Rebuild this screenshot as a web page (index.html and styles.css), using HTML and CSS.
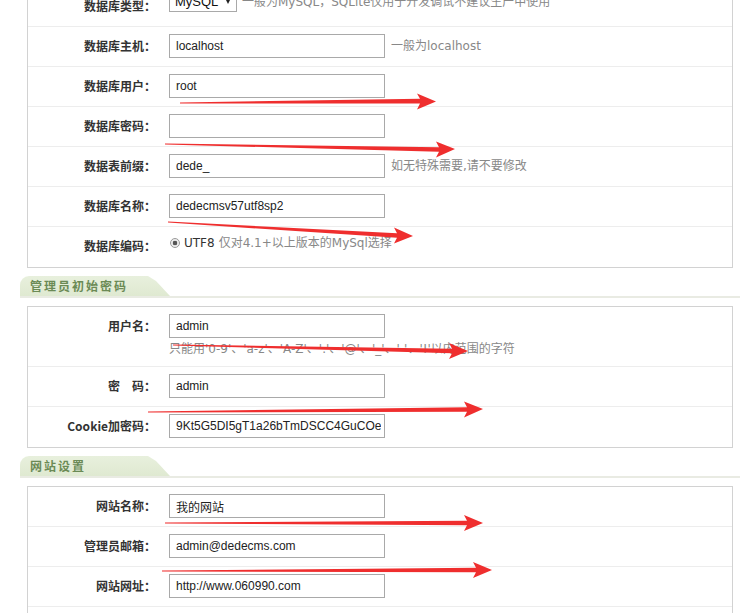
FILE: index.html
```html
<!DOCTYPE html>
<html lang="zh-CN">
<head>
<meta charset="utf-8">
<title>DedeCMS 安装 - 参数配置</title>
<link rel="stylesheet" href="styles.css">
</head>
<body>
<div class="page">
  <div class="panel">
    <div class="row">
      <div class="lbl">数据库类型：</div>
      <div class="fld fld-type"><span class="select">MySQL<span class="caret"></span></span><span class="hint hint-sel">一般为MySQL，SQLite仅用于开发调试不建议生产中使用</span></div>
    </div>
    <div class="row">
      <div class="lbl">数据库主机：</div>
      <div class="fld"><input class="txt" type="text" value="localhost"><span class="hint">一般为localhost</span></div>
    </div>
    <div class="row">
      <div class="lbl">数据库用户：</div>
      <div class="fld"><input class="txt" type="text" value="root"></div>
    </div>
    <div class="row">
      <div class="lbl">数据库密码：</div>
      <div class="fld"><input class="txt" type="text" value=""></div>
    </div>
    <div class="row">
      <div class="lbl">数据表前缀：</div>
      <div class="fld"><input class="txt" type="text" value="dede_"><span class="hint">如无特殊需要,请不要修改</span></div>
    </div>
    <div class="row">
      <div class="lbl">数据库名称：</div>
      <div class="fld"><input class="txt" type="text" value="dedecmsv57utf8sp2"></div>
    </div>
    <div class="row">
      <div class="lbl">数据库编码：</div>
      <div class="fld fld-enc"><span class="radio"></span><span class="enc">UTF8</span><span class="hint hint-enc">仅对4.1+以上版本的MySql选择</span></div>
    </div>
  </div>

  <div class="sec"><div class="tab">管理员初始密码</div></div>

  <div class="panel">
    <div class="row row-tall">
      <div class="lbl">用户名：</div>
      <div class="fld fld-col"><input class="txt" type="text" value="admin"><span class="hint hint-below">只能用'0-9'、'a-z'、'A-Z'、'.'、'@'、'_'、'-'、'!'以内范围的字符</span></div>
    </div>
    <div class="row">
      <div class="lbl">密　码：</div>
      <div class="fld"><input class="txt" type="text" value="admin"></div>
    </div>
    <div class="row">
      <div class="lbl">Cookie加密码：</div>
      <div class="fld"><input class="txt" type="text" value="9Kt5G5DI5gT1a26bTmDSCC4GuCOeFjWQ"></div>
    </div>
  </div>

  <div class="sec"><div class="tab">网站设置</div></div>

  <div class="panel">
    <div class="row">
      <div class="lbl">网站名称：</div>
      <div class="fld"><input class="txt" type="text" value="我的网站"></div>
    </div>
    <div class="row">
      <div class="lbl">管理员邮箱：</div>
      <div class="fld"><input class="txt" type="text" value="admin@dedecms.com"></div>
    </div>
    <div class="row">
      <div class="lbl">网站网址：</div>
      <div class="fld"><input class="txt" type="text" value="http://www.060990.com"></div>
    </div>
    <div class="row">
      <div class="lbl">CMS安装目录：</div>
      <div class="fld"><input class="txt" type="text" value=""></div>
    </div>
  </div>
</div>

<svg class="marks" width="753" height="613" viewBox="0 0 753 613" aria-hidden="true">
  <g fill="#ef2e2e">
    <polygon points="180,102.5 420,98.8 417,93.5 436,101.5 417,109.5 420,103.4 180,103.5"/>
    <polygon points="165,143.5 439,147.2 436,141.5 455,149 436,157.5 439,151.8 165,144.5"/>
    <polygon points="168,221.5 397,233.2 394,227.5 413,236 394,243.5 397,237.8 168,222.5"/>
    <polygon points="173,344.5 452,348.7 449,343 468,351 449,359 452,353.3 173,345.5"/>
    <polygon points="148,411.5 467,407.2 464,401.5 483,409 464,417.5 467,411.8 148,412.5"/>
    <polygon points="165,522.5 467,520.7 464,515 483,523 464,531 467,525.3 165,523.5"/>
    <polygon points="162,570.5 476,567.7 473,562 492,570 473,578 476,572.3 162,571.5"/>
  </g>
</svg>
</body>
</html>
```

FILE: styles.css
```css
html, body {
  margin: 0;
  padding: 0;
  background: #fff;
  overflow: hidden;
}

body {
  width: 753px;
  height: 613px;
  font-family: "DejaVu Sans", "Noto Sans CJK SC", sans-serif;
  font-size: 12px;
  color: #333;
}

.page {
  margin-top: -14px;
  padding-left: 20px;
  width: 720px;
}

.panel {
  margin-left: 7px;
  width: 706px;
  box-sizing: border-box;
  border: 1px solid #d2d2d2;
  background: #fff;
}

.row {
  display: flex;
  align-items: flex-start;
  padding: 7px 0 8px;
  border-bottom: 1px solid #ededed;
}

.row:last-child {
  border-bottom: none;
  padding-bottom: 9px;
}

.row-tall {
  padding-bottom: 6px;
}

.lbl {
  flex: none;
  width: 128px;
  text-align: right;
  line-height: 24px;
  font-family: "Noto Sans CJK SC", sans-serif;
  font-weight: 700;
  font-size: 12px;
  color: #333;
  white-space: nowrap;
}

.fld {
  margin-left: 13px;
  display: flex;
  align-items: center;
  line-height: 24px;
  min-height: 24px;
}

.fld-col {
  flex-direction: column;
  align-items: flex-start;
}

.txt {
  display: block;
  margin: 0;
  width: 216px;
  height: 24px;
  box-sizing: border-box;
  border: 1px solid #a9a9a9;
  border-radius: 0;
  padding: 0 3px 0 6px;
  font-family: "Liberation Sans", "Noto Sans CJK SC", sans-serif;
  font-size: 12px;
  color: #222;
  background: #fff;
  outline: none;
}

.hint {
  margin-left: 6px;
  color: #888;
  white-space: nowrap;
  font-family: "DejaVu Sans", "Noto Sans CJK SC", sans-serif;
  font-size: 12px;
}

.hint-below {
  margin-left: 0;
  line-height: 22px;
}

.fld-type {
  margin-top: -2px;
  line-height: 20px;
  min-height: 20px;
}

.select {
  display: flex;
  align-items: center;
  width: 68px;
  height: 20px;
  box-sizing: border-box;
  border: 1px solid #a9a9a9;
  padding-left: 5px;
  font-family: "Liberation Sans", sans-serif;
  font-size: 13px;
  color: #111;
  background: #fff;
}

.caret {
  margin-left: auto;
  margin-right: 6px;
  width: 0;
  height: 0;
  border-left: 2.5px solid transparent;
  border-right: 2.5px solid transparent;
  border-top: 4px solid #222;
}

.hint-sel {
  margin-left: 5px;
}

.fld-enc {
  line-height: 18px;
  min-height: 18px;
}

.radio {
  flex: none;
  width: 10px;
  height: 10px;
  margin-left: 1px;
  box-sizing: border-box;
  border: 1px solid #9a9a9a;
  border-radius: 50%;
  background: radial-gradient(circle, #555 0, #555 2px, #e9e9e9 2.6px, #f4f4f4 100%);
}

.enc {
  margin-left: 4px;
  color: #333;
  font-family: "DejaVu Sans", sans-serif;
}

.hint-enc {
  margin-left: 4px;
}

.sec {
  margin: 8px 0;
  height: 22px;
  box-sizing: border-box;
  border-bottom: 2px solid #e9ebe3;
}

.tab {
  width: 150px;
  height: 20px;
  box-sizing: border-box;
  padding-left: 10px;
  line-height: 20px;
  border-top-left-radius: 9px;
  background: linear-gradient(to bottom, #e8f0dd, #dfe9d1);
  clip-path: polygon(0 0, 128px 0, 136px 5px, 150px 100%, 0 100%);
  font-family: "Noto Sans CJK SC", sans-serif;
  font-weight: 700;
  font-size: 12px;
  letter-spacing: 2px;
  color: #6b8a55;
  white-space: nowrap;
}

.marks {
  position: absolute;
  top: 0;
  left: 0;
  pointer-events: none;
}
```
